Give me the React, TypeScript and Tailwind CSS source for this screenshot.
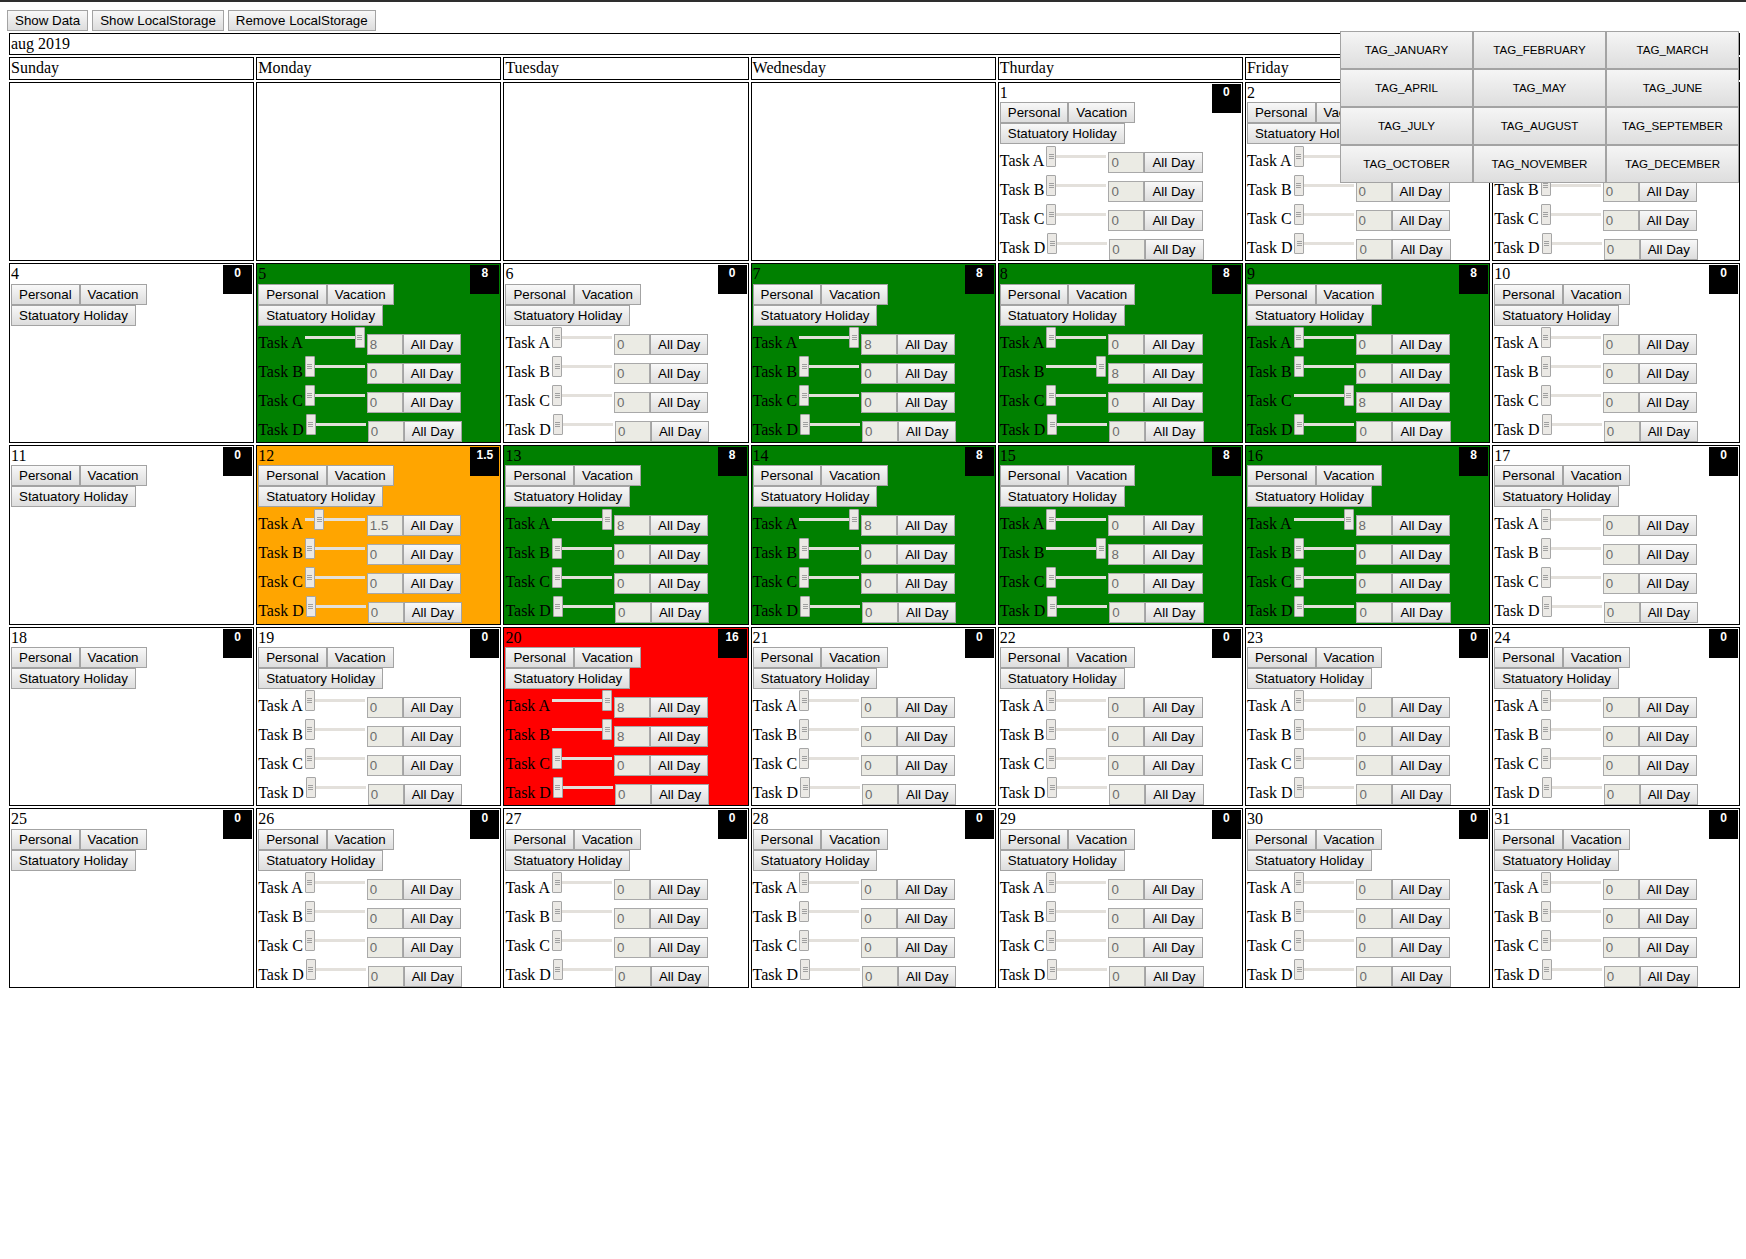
import type { ReactNode } from 'react'

type Day = {
  d: number
  total: string
  bg?: string
  tasks: number[] | null
}

const SANS = "font-['Liberation_Sans',Arial,sans-serif]"

const DAY_NAMES = ['Sunday', 'Monday', 'Tuesday', 'Wednesday', 'Thurday', 'Friday', 'Saturday']

const TAGS = [
  'TAG_JANUARY', 'TAG_FEBRUARY', 'TAG_MARCH',
  'TAG_APRIL', 'TAG_MAY', 'TAG_JUNE',
  'TAG_JULY', 'TAG_AUGUST', 'TAG_SEPTEMBER',
  'TAG_OCTOBER', 'TAG_NOVEMBER', 'TAG_DECEMBER',
]

const zero = [0, 0, 0, 0]

function day(d: number, total = '0', bg = '', tasks: number[] | null = zero): Day {
  return { d, total, bg, tasks }
}

// sundays have no task rows
const weeks: (Day | null)[][] = [
  [null, null, null, null, day(1), day(2), day(3)],
  [
    day(4, '0', '', null),
    day(5, '8', 'bg-[#008000]', [8, 0, 0, 0]),
    day(6),
    day(7, '8', 'bg-[#008000]', [8, 0, 0, 0]),
    day(8, '8', 'bg-[#008000]', [0, 8, 0, 0]),
    day(9, '8', 'bg-[#008000]', [0, 0, 8, 0]),
    day(10),
  ],
  [
    day(11, '0', '', null),
    day(12, '1.5', 'bg-[#ffa500]', [1.5, 0, 0, 0]),
    day(13, '8', 'bg-[#008000]', [8, 0, 0, 0]),
    day(14, '8', 'bg-[#008000]', [8, 0, 0, 0]),
    day(15, '8', 'bg-[#008000]', [0, 8, 0, 0]),
    day(16, '8', 'bg-[#008000]', [8, 0, 0, 0]),
    day(17),
  ],
  [
    day(18, '0', '', null),
    day(19),
    day(20, '16', 'bg-[#ff0000]', [8, 8, 0, 0]),
    day(21),
    day(22),
    day(23),
    day(24),
  ],
  [day(25, '0', '', null), day(26), day(27), day(28), day(29), day(30), day(31)],
]

function Btn({ children, className = '' }: { children: ReactNode; className?: string }) {
  return (
    <button
      className={`h-[21px] shrink-0 whitespace-nowrap border border-[#a3a3a3] bg-linear-to-b from-[#f8f8f8] to-[#dddddd] px-[7px] text-[13.33px] leading-[15px] text-black ${SANS} ${className}`}
    >
      {children}
    </button>
  )
}

function Slider({ v }: { v: number }) {
  const left = (50 * v) / 8
  return (
    <div className="relative mx-[2px] mt-[1.5px] h-[21px] w-[60px] shrink-0">
      <div className="absolute left-0 right-0 top-[9px] h-[3px] bg-[#e3e0db]" />
      <div
        className="absolute top-0 flex h-[21px] w-[10px] flex-col items-center justify-center gap-[1px] rounded-[1px] border border-[#a6a6a6] bg-[#ebe9e5]"
        style={{ left }}
      >
        <span className="h-[1px] w-[5px] bg-[#a0a0a0]" />
        <span className="h-[1px] w-[5px] bg-[#a0a0a0]" />
        <span className="h-[1px] w-[5px] bg-[#a0a0a0]" />
      </div>
    </div>
  )
}

function TaskRow({ name, v }: { name: string; v: number }) {
  return (
    <div className="flex h-[29px] items-start">
      <span className="mt-[8px] shrink-0 whitespace-nowrap text-[16px] leading-[18.4px]">Task {name}</span>
      <Slider v={v} />
      <div
        className={`mt-[8px] h-[21px] w-[36px] shrink-0 border border-[#a9a9a9] bg-[#ebebe4] pl-[2px] text-[13.33px] leading-[19px] text-[#6d6d6d] ${SANS}`}
      >
        {v}
      </div>
      <Btn className="mt-[8px]">All Day</Btn>
    </div>
  )
}

function DayCell({ item }: { item: Day | null }) {
  if (!item) return <div className="h-[179.6px] border border-black" />
  return (
    <div className={`relative h-[179.6px] overflow-hidden border border-black p-[1px] ${item.bg}`}>
      <div
        className={`absolute right-[1px] top-[1px] h-[29px] w-[29px] bg-black pt-[2px] text-center text-[12px] font-bold leading-[13.8px] text-white ${SANS}`}
      >
        {item.total}
      </div>
      <div className="text-[16px] leading-[18.4px]">{item.d}</div>
      <div className="flex">
        <Btn>Personal</Btn>
        <Btn>Vacation</Btn>
      </div>
      <div className="flex">
        <Btn>Statuatory Holiday</Btn>
      </div>
      {item.tasks &&
        ['A', 'B', 'C', 'D'].map((n, i) => <TaskRow key={n} name={n} v={item.tasks![i]} />)}
    </div>
  )
}

export default function App() {
  return (
    <div className="relative min-h-[1259px] w-[1746px] bg-white font-['Liberation_Serif','Times_New_Roman',serif] text-black">
      <div className="h-[2px] bg-[#2e2e2e]" />
      <div className="flex pl-[7px] pt-[8px]">
        <Btn>Show Data</Btn>
        <Btn className="ml-[4px]">Show LocalStorage</Btn>
        <Btn className="ml-[4px]">Remove LocalStorage</Btn>
      </div>

      <div className="ml-[7px] grid w-[1735px] grid-cols-[repeat(6,245.2px)_1fr] gap-[2px] p-[2px]">
        <div className="col-span-7 h-[22.4px] border border-black px-[1px] text-[16px] leading-[18.4px]">
          <div className="pt-[1px]">aug 2019</div>
        </div>
        {DAY_NAMES.map((n) => (
          <div key={n} className="h-[22.4px] border border-black px-[1px] pt-[1px] text-[16px] leading-[18.4px]">
            {n}
          </div>
        ))}
        {weeks.flat().map((item, i) => (
          <DayCell key={i} item={item} />
        ))}
      </div>

      <div className="absolute left-[1340px] top-[31px] grid w-[399px] grid-cols-3">
        {TAGS.map((t) => (
          <button
            key={t}
            className={`h-[38px] border border-[#a3a3a3] bg-linear-to-b from-[#f5f5f5] to-[#dedede] text-center text-[11.6px] text-black ${SANS}`}
          >
            {t}
          </button>
        ))}
      </div>
    </div>
  )
}
